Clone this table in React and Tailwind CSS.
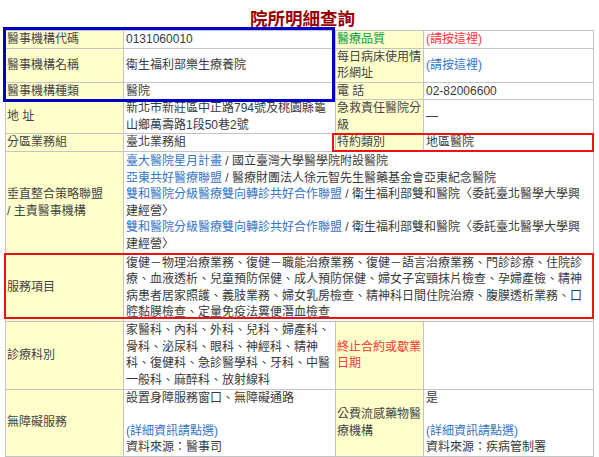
export default function App() {
  const font = { fontFamily: '"Liberation Sans", "Noto Sans CJK TC", sans-serif' };
  const th = "bg-[#ffffcc] border border-[#c4c4c4] text-left font-normal align-middle px-[1px] py-0 text-[#444]";
  const td = "bg-white border border-[#c4c4c4] align-middle pl-[2px] pr-[3px] py-0 text-[#3a3a3a]";
  const link = "text-[#3574c4]";
  return (
    <div className="w-[599px] h-[457px] overflow-hidden bg-white" style={font}>
      <div className="h-[30px] flex items-center justify-center pt-[6px] pl-[6px]">
        <span className="text-[17.5px] font-bold text-[#990000] leading-none" style={{ fontFamily: '"Noto Sans CJK TC", serif' }}>院所明細查詢</span>
      </div>
      <div className="relative ml-[5px] w-[588px]">
        <table className="table-fixed border-collapse w-[588px] text-[12px] leading-[16.5px] border border-[#8a8a8a]">
          <colgroup>
            <col className="w-[118px]" />
            <col className="w-[212px]" />
            <col className="w-[88px]" />
            <col className="w-[170px]" />
          </colgroup>
          <tbody>
            <tr>
              <th className={th}>醫事機構代碼</th>
              <td className={td}>0131060010</td>
              <th className={th}><span className="text-[#009944]">醫療品質</span></th>
              <td className={td}><span className="text-[#ff3333]">(請按這裡)</span></td>
            </tr>
            <tr>
              <th className={th}>醫事機構名稱</th>
              <td className={td}>衛生福利部樂生療養院</td>
              <th className={th}>每日病床使用情<br />形網址</th>
              <td className={td}><span className={link}>(請按這裡)</span></td>
            </tr>
            <tr>
              <th className={th}>醫事機構種類</th>
              <td className={td}>醫院</td>
              <th className={th}>電 話</th>
              <td className={td}>02-82006600</td>
            </tr>
            <tr>
              <th className={th}>地 址</th>
              <td className={td}>新北市新莊區中正路794號及桃園縣龜山鄉萬壽路1段50巷2號</td>
              <th className={th}>急救責任醫院分<br />級</th>
              <td className={td}>—</td>
            </tr>
            <tr>
              <th className={th}>分區業務組</th>
              <td className={td}>臺北業務組</td>
              <th className={th}>特約類別</th>
              <td className={td}>地區醫院</td>
            </tr>
            <tr>
              <th className={th + " h-[103px]"}>垂直整合策略聯盟<br />/ 主責醫事機構</th>
              <td className={td} colSpan={3}>
                <div><span className={link}>臺大醫院星月計畫</span> / 國立臺灣大學醫學院附設醫院</div>
                <div><span className={link}>亞東共好醫療聯盟</span> / 醫療財團法人徐元智先生醫藥基金會亞東紀念醫院</div>
                <div><span className={link}>雙和醫院分級醫療雙向轉診共好合作聯盟</span> / 衛生福利部雙和醫院〈委託臺北醫學大學興建經營〉</div>
                <div><span className={link}>雙和醫院分級醫療雙向轉診共好合作聯盟</span> / 衛生福利部雙和醫院〈委託臺北醫學大學興建經營〉</div>
              </td>
            </tr>
            <tr>
              <th className={th}>服務項目</th>
              <td className={td} colSpan={3}>復健－物理治療業務、復健－職能治療業務、復健－語言治療業務、門診診療、住院診療、血液透析、兒童預防保健、成人預防保健、婦女子宮頸抹片檢查、孕婦產檢、精神病患者居家照護、義肢業務、婦女乳房檢查、精神科日間住院治療、腹膜透析業務、口腔黏膜檢查、定量免疫法糞便潛血檢查</td>
            </tr>
            <tr>
              <th className={th}>診療科別</th>
              <td className={td + " h-[68px]"}>家醫科、內科、外科、兒科、婦產科、骨科、泌尿科、眼科、神經科、精神科、復健科、急診醫學科、牙科、中醫一般科、麻醉科、放射線科</td>
              <th className={th}><span className="text-[#ff3333]">終止合約或歇業<br />日期</span></th>
              <td className={td}></td>
            </tr>
            <tr>
              <th className={th}>無障礙服務</th>
              <td className={td}>
                <div>設置身障服務窗口、無障礙通路</div>
                <div>&nbsp;</div>
                <div><span className={link}>(詳細資訊請點選)</span></div>
                <div>資料來源：醫事司</div>
              </td>
              <th className={th}>公費流感藥物醫<br />療機構</th>
              <td className={td}>
                <div>是</div>
                <div>&nbsp;</div>
                <div><span className={link}>(詳細資訊請點選)</span></div>
                <div>資料來源：疾病管制署</div>
              </td>
            </tr>
          </tbody>
        </table>
        <div className="absolute left-[-2px] top-[-3px] w-[332px] h-[75px] border-[3px] border-[#0000cc]"></div>
        <div className="absolute left-[327px] top-[103px] w-[262px] h-[19px] border-2 border-[#ee1111]"></div>
        <div className="absolute left-[-1px] top-[223px] w-[590px] h-[66px] border-2 border-[#ee1111]"></div>
      </div>
    </div>
  );
}
